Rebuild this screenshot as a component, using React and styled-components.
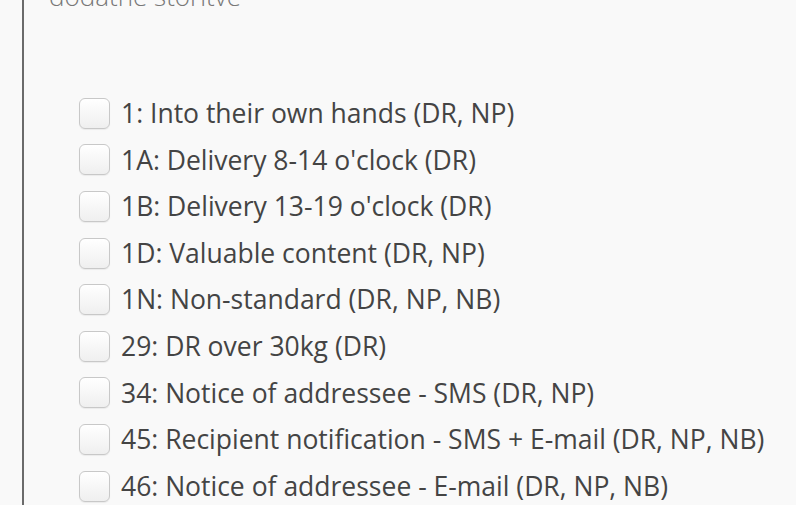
import React from "react";
import styled, { createGlobalStyle } from "styled-components";

const Global = createGlobalStyle`
    html, body {
        margin: 0;
        padding: 0;
        background: #f9f9f9;
        overflow: hidden;
    }
    body {
        font-family: "Open Sans", "Liberation Sans", sans-serif;
    }
`

const services = [
    "1: Into their own hands (DR, NP)",
    "1A: Delivery 8-14 o'clock (DR)",
    "1B: Delivery 13-19 o'clock (DR)",
    "1D: Valuable content (DR, NP)",
    "1N: Non-standard (DR, NP, NB)",
    "29: DR over 30kg (DR)",
    "34: Notice of addressee - SMS (DR, NP)",
    "45: Recipient notification - SMS + E-mail (DR, NP, NB)",
    "46: Notice of addressee - E-mail (DR, NP, NB)",
];

const App = () => {
    return (
        <>
            <Global />
            <Page>
                <Section>
                    <Legend>dodatne storitve</Legend>
                    <List>
                        {services.map((s) => (
                            <Row key={s}>
                                <Box type="checkbox" />
                                <span>{s}</span>
                            </Row>
                        ))}
                    </List>
                </Section>
            </Page>
        </>
    )
}

const Page = styled.div`
    height: 505px;
    padding-left: 22px;
    overflow: hidden;
`

const Section = styled.div`
    border-left: 2px solid #6b6b6b;
    margin-top: -22px;
    padding-bottom: 40px;
`

const Legend = styled.div`
    padding-left: 25px;
    font-size: 26px;
    font-weight: 300;
    line-height: 36px;
    color: #777;
`

const List = styled.div`
    padding: 76px 0 0 55px;
    display: flex;
    flex-direction: column;
`

const Row = styled.label`
    display: flex;
    align-items: center;
    gap: 11px;
    height: 46.6px;
    font-size: 26.5px;
    color: #444;

    span{
        line-height: 1;
    }
`

const Box = styled.input`
    appearance: none;
    margin: 0;
    width: 31px;
    height: 31px;
    box-sizing: border-box;
    border: 1px solid #c8c8c8;
    border-radius: 6px;
    background: linear-gradient(#ffffff, #efefef);
    box-shadow: 0 1px 1px rgba(0,0,0,0.06);
`

export default App;
